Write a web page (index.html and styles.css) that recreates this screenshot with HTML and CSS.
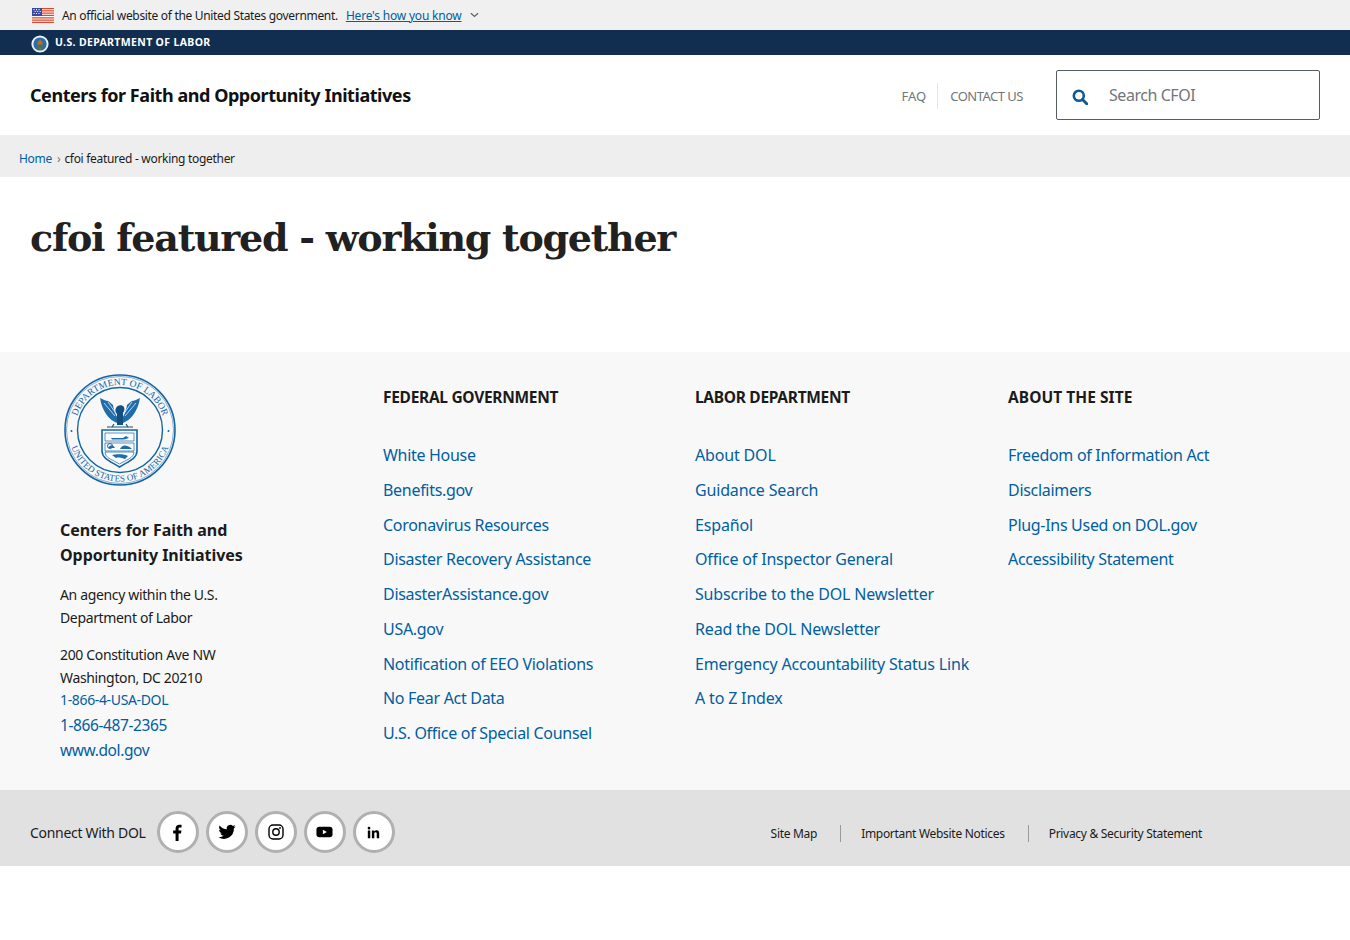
FILE: index.html
```html
<!DOCTYPE html>
<html lang="en">
<head>
<meta charset="utf-8">
<title>cfoi featured - working together</title>
<link rel="stylesheet" href="styles.css">
</head>
<body>
<div class="gov-banner">
  <svg class="flag" viewBox="0 0 22 14" width="22" height="15" preserveAspectRatio="none" aria-hidden="true">
    <rect width="22" height="14" fill="#fff"/>
    <path d="M0 0h22v1.100H0zM0 2.200h22v1.100H0zM0 4.300h22v1.100H0zM0 6.400h22v1.100H0zM0 8.600h22v1.100H0zM0 10.700h22v1.100H0zM0 12.900h22V14H0z" fill="#d8492f"/>
    <rect width="10" height="7.500" fill="#3a4a9a"/>
    <path d="M1.500 1.500h1M4 1.500h1M6.500 1.500h1M2.700 3.300h1M5.200 3.300h1M7.700 3.300h1M1.500 5.200h1M4 5.200h1M6.500 5.200h1" stroke="#fff" stroke-width="1"/>
  </svg>
  <span class="gov-text">An official website of the United States government.</span>
  <a class="gov-link" href="#">Here's how you know</a>
  <svg class="chev" viewBox="0 0 10 6" width="9" height="6" aria-hidden="true"><path d="M1 1l4 3.600L9 1" fill="none" stroke="#5b6670" stroke-width="1.500"/></svg>
</div>
<div class="dol-bar">
  <svg class="dol-seal" viewBox="0 0 18 18" width="18" height="18" aria-hidden="true">
    <circle cx="9" cy="9" r="8.600" fill="#e8eef3"/>
    <circle cx="9" cy="9" r="6.600" fill="#2a6ea6"/>
    <path d="M9 4.500l2.600 3.200-.9 6.300H7.300l-.9-6.300z" fill="#c8662c"/>
    <path d="M7.200 9.500h3.600v4.200H7.200z" fill="#47734a"/>
  </svg>
  <span class="dol-name">U.S. DEPARTMENT OF LABOR</span>
</div>
<header class="site-header">
  <a class="site-title" href="#">Centers for Faith and Opportunity Initiatives</a>
  <nav class="top-nav">
    <a href="#" class="top-link first">FAQ</a>
    <a href="#" class="top-link">CONTACT US</a>
  </nav>
  <div class="search">
    <svg class="search-icon" viewBox="0 0 16 16" width="16" height="16" aria-hidden="true"><circle cx="6.800" cy="6.800" r="5" fill="none" stroke="#0f5a91" stroke-width="2.600"/><path d="M10.500 10.500l4.200 4.200" stroke="#0f5a91" stroke-width="3" stroke-linecap="round"/></svg>
    <span class="search-ph">Search CFOI</span>
  </div>
</header>
<div class="crumbs"><a href="#">Home</a><span class="sep">›</span><span>cfoi featured - working together</span></div>
<main class="main"><h1>cfoi featured - working together</h1></main>
<footer class="footer">
  <div class="about">
    <svg class="seal" viewBox="0 0 112 112" width="112" height="112" role="img" aria-label="Seal of the Department of Labor">
      <defs>
        <path id="arcTop" d="M11 56a45 45 0 0 1 90 0"/>
        <path id="arcBot" d="M4.500 56a51.500 51.500 0 0 0 103 0"/>
      </defs>
      <g fill="none" stroke="#1565a5">
        <circle cx="56" cy="56" r="55" stroke-width="1.600"/>
        <circle cx="56" cy="56" r="53.500" stroke-width=".5"/>
        <circle cx="56" cy="56" r="42.500" stroke-width="1.400"/>
      </g>
      <text class="seal-text"><textPath href="#arcTop" startOffset="50%" text-anchor="middle">DEPARTMENT OF LABOR</textPath></text>
      <text class="seal-text seal-low"><textPath href="#arcBot" startOffset="50%" text-anchor="middle">UNITED STATES OF AMERICA</textPath></text>
      <circle cx="7.500" cy="57" r="1" fill="#1565a5"/><circle cx="104.500" cy="57" r="1" fill="#1565a5"/>
      <path d="M53 49C45 46 38 37 36 24c4 2 6 3 8 3 3 2 4 3 5 4 1 6 3 11 5 13zM59 49c8-3 15-12 17-25-4 2-6 3-8 3-3 2-4 3-5 4-1 6-3 11-5 13z" fill="#1f6cab"/>
      <path d="M40 29l11 13M44 28l9 13M72 29l-11 13M68 28l-9 13" stroke="#e6eff6" stroke-width=".8"/>
      <path d="M52 34c1-3 6-4 8-1 1 3 0 4-1 6v12h-6V40c-2-2-2-4-1-6z" fill="#14507f"/>
      <path d="M43 53h26M50 50l-2 3M62 50l2 3" stroke="#14507f" stroke-width="1.200"/>
      <path d="M38 56h35v21c0 8-10 11-17.500 16-7.500-5-17.500-8-17.500-16z" fill="#fbfcfd" stroke="#1565a5" stroke-width="1.600"/>
      <path d="M41 59h29v8H41zM41 69h29v8H41z" fill="none" stroke="#1565a5" stroke-width=".7"/>
      <path d="M41 78h29c0 6-8 8-14.500 12-6.500-4-14.500-6-14.500-12z" fill="none" stroke="#1565a5" stroke-width=".7"/>
      <path d="M47 64h12l3-2 3 2-5 1.500H48zM44 74c3-4 5-3 7 0zM56 75c2-4 6-5 12 0zM48 81c5-1 13-1 16 1l-3 3c-3-1-7-2-9-1z" fill="#1f6cab"/>
      <circle cx="46" cy="72" r="2.500" fill="none" stroke="#1f6cab"/>
    </svg>
    <h2 class="about-title">Centers for Faith and Opportunity Initiatives</h2>
    <p class="about-text">An agency within the U.S. Department of Labor</p>
    <p class="about-addr">200 Constitution Ave NW<br>Washington, DC 20210</p>
    <a class="phone-sm" href="#">1-866-4-USA-DOL</a>
    <a class="phone" href="#">1-866-487-2365</a>
    <a class="phone" href="#">www.dol.gov</a>
  </div>
  <div class="col col-1">
    <h3>FEDERAL GOVERNMENT</h3>
    <ul>
      <li><a href="#">White House</a></li>
      <li><a href="#">Benefits.gov</a></li>
      <li><a href="#">Coronavirus Resources</a></li>
      <li><a href="#">Disaster Recovery Assistance</a></li>
      <li><a href="#">DisasterAssistance.gov</a></li>
      <li><a href="#">USA.gov</a></li>
      <li><a href="#">Notification of EEO Violations</a></li>
      <li><a href="#">No Fear Act Data</a></li>
      <li><a href="#">U.S. Office of Special Counsel</a></li>
    </ul>
  </div>
  <div class="col col-2">
    <h3>LABOR DEPARTMENT</h3>
    <ul>
      <li><a href="#">About DOL</a></li>
      <li><a href="#">Guidance Search</a></li>
      <li><a href="#">Español</a></li>
      <li><a href="#">Office of Inspector General</a></li>
      <li><a href="#">Subscribe to the DOL Newsletter</a></li>
      <li><a href="#">Read the DOL Newsletter</a></li>
      <li><a href="#">Emergency Accountability Status Link</a></li>
      <li><a href="#">A to Z Index</a></li>
    </ul>
  </div>
  <div class="col col-3">
    <h3>ABOUT THE SITE</h3>
    <ul>
      <li><a href="#">Freedom of Information Act</a></li>
      <li><a href="#">Disclaimers</a></li>
      <li><a href="#">Plug-Ins Used on DOL.gov</a></li>
      <li><a href="#">Accessibility Statement</a></li>
    </ul>
  </div>
</footer>
<div class="social-bar">
  <span class="connect">Connect With DOL</span>
  <div class="socials">
    <a class="social" href="#" aria-label="Facebook"><svg viewBox="0 0 16 16" width="17" height="17"><path d="M6.200 16V9H3.900V6.200h2.300V4.300C6.200 1.900 7.600.6 9.700.6c1 0 1.900.1 2.100.1v2.500h-1.400c-1.200 0-1.400.5-1.400 1.300v1.700h2.700L11.300 9H9V16z"/></svg></a>
    <a class="social" href="#" aria-label="Twitter"><svg viewBox="0 0 24 24" width="18" height="18"><path d="M23.500 4.600c-.8.400-1.800.6-2.700.8 1-.6 1.700-1.500 2.100-2.600-.9.600-2 1-3 1.200a4.700 4.700 0 0 0-8.100 4.300C7.900 8.100 4.400 6.200 2.100 3.300c-1.300 2.200-.6 4.900 1.500 6.300-.8 0-1.500-.2-2.100-.6 0 2.300 1.600 4.300 3.800 4.700-.7.200-1.400.2-2.100.1.600 1.900 2.300 3.200 4.400 3.300A9.500 9.500 0 0 1 .6 19a13.400 13.400 0 0 0 20.600-11.900c.9-.7 1.700-1.500 2.300-2.500z"/></svg></a>
    <a class="social" href="#" aria-label="Instagram"><svg viewBox="0 0 16 16" width="16" height="16"><rect x="1" y="1" width="14" height="14" rx="4" fill="none" stroke="#000" stroke-width="1.400"/><circle cx="8" cy="8" r="3.200" fill="none" stroke="#000" stroke-width="1.400"/><circle cx="12" cy="4" r=".9"/></svg></a>
    <a class="social" href="#" aria-label="YouTube"><svg viewBox="0 0 18 14" width="17" height="12" preserveAspectRatio="none"><path d="M3.500 1h11C16.400 1 17.500 2 17.500 4v6c0 2-1.100 3-3 3h-11C1.600 13 .5 12 .5 10V4c0-2 1.100-3 3-3z"/><path d="M7.300 4.500v5L11.500 7z" fill="#fff"/></svg></a>
    <a class="social" href="#" aria-label="LinkedIn"><svg viewBox="0 0 16 16" width="13" height="13"><path d="M1 5.500h3V15H1zM2.500 1a1.700 1.700 0 1 1 0 3.400 1.700 1.700 0 0 1 0-3.400zM6 5.500h2.800v1.300c.5-.9 1.600-1.600 3-1.600 2.700 0 3.200 1.800 3.200 4.200V15h-3v-5c0-1.200 0-2.400-1.500-2.400S9 8.700 9 10v5H6z"/></svg></a>
  </div>
  <nav class="legal">
    <a href="#">Site Map</a>
    <a href="#">Important Website Notices</a>
    <a href="#">Privacy &amp; Security Statement</a>
  </nav>
</div>
</body>
</html>
```
FILE: styles.css
```css
* { box-sizing: border-box; }
html, body { margin: 0; padding: 0; }
body { background: #fff; color: #1b1b1b; font-family: "Noto Sans", "Lato", sans-serif; height: 940px; overflow: hidden; letter-spacing: -.3px; }
a { text-decoration: none; color: #005ea2; }
h1, h2, h3, p, ul { margin: 0; padding: 0; }
ul { list-style: none; }

.gov-banner { height: 30px; background: #f0f0f0; display: flex; align-items: center; padding-left: 32px; font-size: 12px; }
.flag { margin-right: 8px; }
.gov-text { margin-right: 8px; letter-spacing: -.32px; }
.gov-link { color: #005ea2; text-decoration: underline; margin-right: 8px; letter-spacing: -.2px; }

.dol-bar { height: 25px; background: #112e51; display: flex; align-items: center; padding-left: 31px; }
.dol-seal { margin-right: 6px; margin-top: 3px; }
.dol-name { color: #fff; font-weight: 700; font-size: 10.500px; letter-spacing: .35px; margin-top: -2px; }

.site-header { height: 80px; display: flex; align-items: center; padding: 0 30px; }
.site-title { color: #111; font-weight: 700; font-size: 18px; letter-spacing: -.45px; }
.top-nav { margin-left: auto; display: flex; align-items: center; margin-top: 2px; }
.top-link { color: #71767a; font-size: 13px; line-height: 26px; padding: 0 12px; letter-spacing: -.5px; }
.top-link.first { border-right: 1px solid #e6e6e6; letter-spacing: 0; padding-right: 11px; }
.search { margin-left: 21px; width: 264px; height: 50px; border: 1px solid #565c65; border-radius: 2px; display: flex; align-items: center; padding-left: 15px; }
.search-icon { margin-top: 3px; }
.search-ph { margin-left: 21px; color: #71767a; font-size: 16px; letter-spacing: -.45px; }

.crumbs { height: 42px; background: #eee; display: flex; align-items: center; padding: 4px 0 0 19px; font-size: 12px; color: #1b1b1b; }
.crumbs .sep { margin: 0 4px 0 5px; color: #71767a; }

.main { height: 175px; padding: 34px 30px 0; }
h1 { font-family: "DejaVu Serif", "Liberation Serif", serif; font-weight: 700; font-size: 38px; line-height: 54px; color: #212121; letter-spacing: -1.250px; }

.footer { height: 438px; background: #f8f8f8; display: grid; grid-template-columns: 383px 312px 313px 1fr; }
.about { padding: 22px 0 0 60px; font-size: 14px; letter-spacing: -.35px; }
.seal { display: block; margin: 0 0 32px 4px; }
.seal-text { font-family: "Liberation Serif", serif; font-size: 9.500px; fill: #1565a5; letter-spacing: .1px; }
.seal-low { font-size: 9px; }
.about-title { font-size: 16px; font-weight: 700; line-height: 25px; width: 210px; margin-bottom: 15px; color: #1b1b1b; letter-spacing: -.05px; }
.about-text { line-height: 23px; width: 190px; margin-bottom: 14px; }
.about-addr { line-height: 23px; }
.phone-sm { display: block; line-height: 22px; margin-bottom: 2px; font-size: 14px; }
.phone { display: block; line-height: 25px; font-size: 15.500px; letter-spacing: -.4px; }
.col { padding-top: 33px; }
.col h3 { font-size: 15.500px; line-height: 24px; font-weight: 700; color: #1b1b1b; margin-bottom: 32px; }
.col-3 h3 { letter-spacing: .05px; }
.col li { height: 34.750px; line-height: 28px; font-size: 16px; }
.col-2 li { letter-spacing: -.17px; }

.social-bar { height: 76px; background: #e1e1e1; display: flex; align-items: center; padding: 8px 0 0 30px; }
.connect { font-size: 14px; margin-right: 11px; }
.socials { display: flex; gap: 7px; }
.social { width: 42px; height: 42px; border-radius: 50%; background: #fff; border: 3px solid #b0b0b0; display: flex; align-items: center; justify-content: center; }
.legal { margin-left: 356px; display: flex; align-items: center; font-size: 12px; margin-top: 2px; }
.legal a { color: #1b1b1b; padding: 0 23px 0 20px; line-height: 17px; border-left: 1px solid #9a9a9a; }
.legal a:first-child { border-left: 0; }
```
